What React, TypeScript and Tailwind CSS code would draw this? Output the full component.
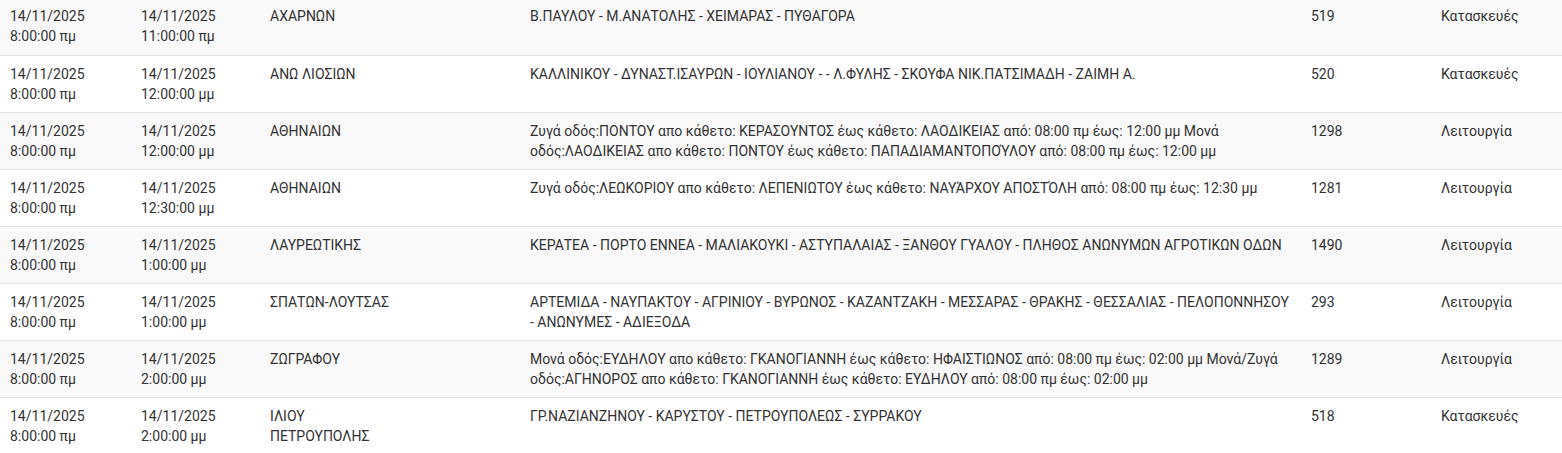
import React from 'react';

interface Outage {
  from: string;
  fromTime: string;
  to: string;
  toTime: string;
  area: string;
  streets: string;
  code: string;
  kind: string;
}

const rows: Outage[] = [
  {
    from: '14/11/2025',
    fromTime: '8:00:00 πμ',
    to: '14/11/2025',
    toTime: '11:00:00 πμ',
    area: 'ΑΧΑΡΝΩΝ',
    streets: 'Β.ΠΑΥΛΟΥ - Μ.ΑΝΑΤΟΛΗΣ - ΧΕΙΜΑΡΑΣ - ΠΥΘΑΓΟΡΑ',
    code: '519',
    kind: 'Κατασκευές',
  },
  {
    from: '14/11/2025',
    fromTime: '8:00:00 πμ',
    to: '14/11/2025',
    toTime: '12:00:00 μμ',
    area: 'ΑΝΩ ΛΙΟΣΙΩΝ',
    streets: 'ΚΑΛΛΙΝΙΚΟΥ - ΔΥΝΑΣΤ.ΙΣΑΥΡΩΝ - ΙΟΥΛΙΑΝΟΥ - - Λ.ΦΥΛΗΣ - ΣΚΟΥΦΑ ΝΙΚ.ΠΑΤΣΙΜΑΔΗ - ΖΑΙΜΗ Α.',
    code: '520',
    kind: 'Κατασκευές',
  },
  {
    from: '14/11/2025',
    fromTime: '8:00:00 πμ',
    to: '14/11/2025',
    toTime: '12:00:00 μμ',
    area: 'ΑΘΗΝΑΙΩΝ',
    streets:
      'Ζυγά οδός:ΠΟΝΤΟΥ απο κάθετο: ΚΕΡΑΣΟΥΝΤΟΣ έως κάθετο: ΛΑΟΔΙΚΕΙΑΣ από: 08:00 πμ έως: 12:00 μμ Μονά οδός:ΛΑΟΔΙΚΕΙΑΣ απο κάθετο: ΠΟΝΤΟΥ έως κάθετο: ΠΑΠΑΔΙΑΜΑΝΤΟΠΟΎΛΟΥ από: 08:00 πμ έως: 12:00 μμ',
    code: '1298',
    kind: 'Λειτουργία',
  },
  {
    from: '14/11/2025',
    fromTime: '8:00:00 πμ',
    to: '14/11/2025',
    toTime: '12:30:00 μμ',
    area: 'ΑΘΗΝΑΙΩΝ',
    streets: 'Ζυγά οδός:ΛΕΩΚΟΡΙΟΥ απο κάθετο: ΛΕΠΕΝΙΩΤΟΥ έως κάθετο: ΝΑΥΆΡΧΟΥ ΑΠΟΣΤΌΛΗ από: 08:00 πμ έως: 12:30 μμ',
    code: '1281',
    kind: 'Λειτουργία',
  },
  {
    from: '14/11/2025',
    fromTime: '8:00:00 πμ',
    to: '14/11/2025',
    toTime: '1:00:00 μμ',
    area: 'ΛΑΥΡΕΩΤΙΚΗΣ',
    streets: 'ΚΕΡΑΤΕΑ - ΠΟΡΤΟ ΕΝΝΕΑ - ΜΑΛΙΑΚΟΥΚΙ - ΑΣΤΥΠΑΛΑΙΑΣ - ΞΑΝΘΟΥ ΓΥΑΛΟΥ - ΠΛΗΘΟΣ ΑΝΩΝΥΜΩΝ ΑΓΡΟΤΙΚΩΝ ΟΔΩΝ',
    code: '1490',
    kind: 'Λειτουργία',
  },
  {
    from: '14/11/2025',
    fromTime: '8:00:00 πμ',
    to: '14/11/2025',
    toTime: '1:00:00 μμ',
    area: 'ΣΠΑΤΩΝ-ΛΟΥΤΣΑΣ',
    streets:
      'ΑΡΤΕΜΙΔΑ - ΝΑΥΠΑΚΤΟΥ - ΑΓΡΙΝΙΟΥ - ΒΥΡΩΝΟΣ - ΚΑΖΑΝΤΖΑΚΗ - ΜΕΣΣΑΡΑΣ - ΘΡΑΚΗΣ - ΘΕΣΣΑΛΙΑΣ - ΠΕΛΟΠΟΝΝΗΣΟΥ - ΑΝΩΝΥΜΕΣ - ΑΔΙΕΞΟΔΑ',
    code: '293',
    kind: 'Λειτουργία',
  },
  {
    from: '14/11/2025',
    fromTime: '8:00:00 πμ',
    to: '14/11/2025',
    toTime: '2:00:00 μμ',
    area: 'ΖΩΓΡΑΦΟΥ',
    streets:
      'Μονά οδός:ΕΥΔΗΛΟΥ απο κάθετο: ΓΚΑΝΟΓΙΑΝΝΗ έως κάθετο: ΗΦΑΙΣΤΙΩΝΟΣ από: 08:00 πμ έως: 02:00 μμ Μονά/Ζυγά οδός:ΑΓΗΝΟΡΟΣ απο κάθετο: ΓΚΑΝΟΓΙΑΝΝΗ έως κάθετο: ΕΥΔΗΛΟΥ από: 08:00 πμ έως: 02:00 μμ',
    code: '1289',
    kind: 'Λειτουργία',
  },
  {
    from: '14/11/2025',
    fromTime: '8:00:00 πμ',
    to: '14/11/2025',
    toTime: '2:00:00 μμ',
    area: 'ΙΛΙΟΥ ΠΕΤΡΟΥΠΟΛΗΣ',
    streets: 'ΓΡ.ΝΑΖΙΑΝΖΗΝΟΥ - ΚΑΡΥΣΤΟΥ - ΠΕΤΡΟΥΠΟΛΕΩΣ - ΣΥΡΡΑΚΟΥ',
    code: '518',
    kind: 'Κατασκευές',
  },
];

const App = () => {
  return (
    <div className="w-[1562px] bg-white font-['Roboto',sans-serif] text-[14px] leading-5 text-[#333]">
      <table className="w-full table-fixed border-collapse">
        <colgroup>
          <col className="w-[131px]" />
          <col className="w-[129px]" />
          <col className="w-[260px]" />
          <col className="w-[781px]" />
          <col className="w-[130px]" />
          <col className="w-[131px]" />
        </colgroup>
        <tbody>
          {rows.map((r, i) => {
            // the first row is partly scrolled out of view at the top
            const cell = i === 0 ? 'align-top pl-[10px] pr-2 pt-[6px] pb-2' : 'align-top pl-[10px] pr-2 py-2';
            return (
              <tr
                key={i}
                className={`border-b border-[#e3e3e3] ${i === 0 ? 'h-[55px]' : 'h-[57px]'} ${i % 2 === 0 ? 'bg-[#f9f9f9]' : 'bg-white'}`}
              >
                <td className={cell}>
                  <div>{r.from}</div>
                  <div>{r.fromTime}</div>
                </td>
                <td className={cell}>
                  <div>{r.to}</div>
                  <div>{r.toTime}</div>
                </td>
                <td className={cell}>
                  <div className="max-w-[130px]">{r.area}</div>
                </td>
                <td className={cell}>{r.streets}</td>
                <td className={cell}>{r.code}</td>
                <td className={cell}>{r.kind}</td>
              </tr>
            );
          })}
        </tbody>
      </table>
    </div>
  );
};

export default App;
